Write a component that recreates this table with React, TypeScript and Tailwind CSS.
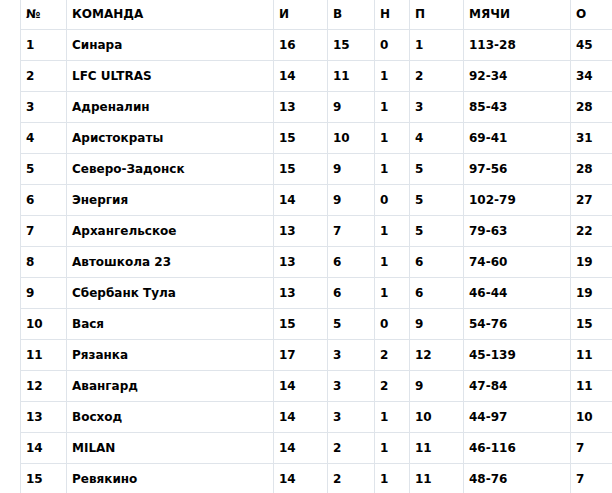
const rows: [number, string, number, number, number, number, string, number][] = [
  [1, "Синара", 16, 15, 0, 1, "113-28", 45],
  [2, "LFC ULTRAS", 14, 11, 1, 2, "92-34", 34],
  [3, "Адреналин", 13, 9, 1, 3, "85-43", 28],
  [4, "Аристократы", 15, 10, 1, 4, "69-41", 31],
  [5, "Северо-Задонск", 15, 9, 1, 5, "97-56", 28],
  [6, "Энергия", 14, 9, 0, 5, "102-79", 27],
  [7, "Архангельское", 13, 7, 1, 5, "79-63", 22],
  [8, "Автошкола 23", 13, 6, 1, 6, "74-60", 19],
  [9, "Сбербанк Тула", 13, 6, 1, 6, "46-44", 19],
  [10, "Вася", 15, 5, 0, 9, "54-76", 15],
  [11, "Рязанка", 17, 3, 2, 12, "45-139", 11],
  [12, "Авангард", 14, 3, 2, 9, "47-84", 11],
  [13, "Восход", 14, 3, 1, 10, "44-97", 10],
  [14, "MILAN", 14, 2, 1, 11, "46-116", 7],
  [15, "Ревякино", 14, 2, 1, 11, "48-76", 7],
];

const headers = ["№", "КОМАНДА", "И", "В", "Н", "П", "МЯЧИ", "О"];

export default function App() {
  return (
    <div className="h-[493px] w-[612px] overflow-hidden bg-white pl-[20px] font-['DejaVu_Sans',Verdana,sans-serif] text-[12px] font-bold text-black">
      <table className="-mt-[2px] w-[640px] table-fixed border-collapse">
        <colgroup>
          <col className="w-[46px]" />
          <col className="w-[207px]" />
          <col className="w-[54px]" />
          <col className="w-[47px]" />
          <col className="w-[35px]" />
          <col className="w-[54px]" />
          <col className="w-[107px]" />
          <col className="w-[90px]" />
        </colgroup>
        <thead>
          <tr className="h-[31px]">
            {headers.map((h) => (
              <th key={h} className="border border-[#dfe4ea] px-[5px] text-left align-middle font-bold">
                {h}
              </th>
            ))}
          </tr>
        </thead>
        <tbody>
          {rows.map((r) => (
            <tr key={r[0]} className="h-[31px]">
              {r.map((c, i) => (
                <td key={i} className="whitespace-nowrap border border-[#dfe4ea] px-[5px] align-middle">
                  {c}
                </td>
              ))}
            </tr>
          ))}
        </tbody>
      </table>
    </div>
  );
}
